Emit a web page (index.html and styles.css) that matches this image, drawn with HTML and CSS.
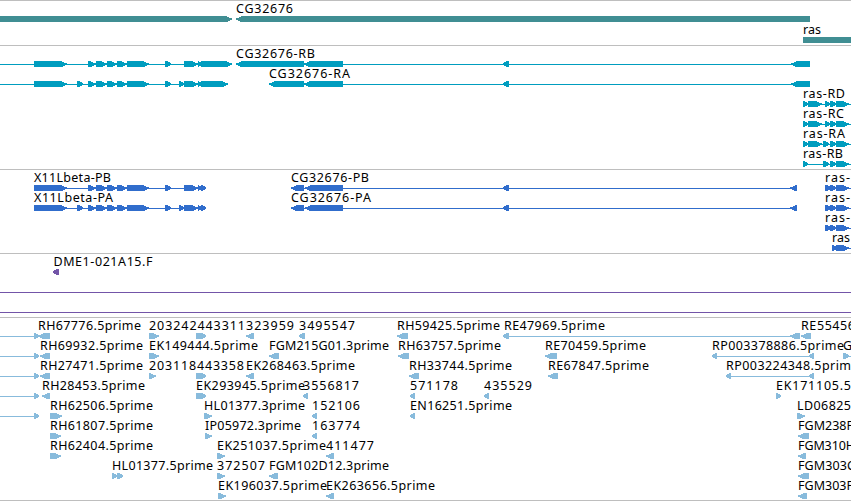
FILE: index.html
```html
<!DOCTYPE html>
<html lang="en">
<head>
<meta charset="utf-8">
<title>Genome browser</title>
<link rel="stylesheet" href="styles.css">
</head>
<body>
<main class="browser">
  <section class="track genes" data-track="genes"></section>
  <section class="track transcripts" data-track="transcripts"></section>
  <section class="track proteins" data-track="proteins"></section>
  <section class="track clones" data-track="clones"></section>
  <section class="track ests" data-track="ests"></section>
</main>
<script src="tracks.js"></script>
</body>
</html>
```
FILE: styles.css
```css
body {
  margin: 0;
  background: #fff;
  overflow: hidden;
}

.browser {
  display: flex;
  flex-direction: column;
  width: 851px;
  height: 501px;
  box-sizing: border-box;
  border-bottom: 1px solid #bebebe;
}

.track {
  box-sizing: border-box;
  border-top: 1px solid #bebebe;
  overflow: hidden;
}

.track svg {
  display: block;
}

.genes { height: 45px; color: #408e93; }
.transcripts { height: 124px; color: #009dbf; }
.proteins { height: 84px; color: #306dcc; }
.clones { height: 64px; color: #7355a8; }
.ests { height: 183px; color: #88bbdc; }

.feature {
  fill: currentColor;
  shape-rendering: crispEdges;
}

.label {
  fill: #000;
  font: 12.5px "Noto Sans", "DejaVu Sans", sans-serif;
}
```
FILE: tracks.js
```js
// Labels: [x, baseline, width, text].
// Rows: [top of the feature boxes, connector spans, right-pointing boxes, left-pointing boxes].
const exons = [[34, 67], [88, 96], [96, 107], [107, 117], [117, 127], [127, 149], [165, 171], [184, 198]];
const extra = [[77, 83], [179, 184]];

const tracks = {
  genes: {
    top: 1, height: 44,
    labels: [[236, 13, 57, 'CG32676'], [803, 34, 18, 'ras']],
    rows: [
      [16, [], [[-20, 232]], [[236, 810]]],
      [37, [], [[803, 900]], []]
    ]
  },
  transcripts: {
    top: 46, height: 123,
    labels: [
      [236, 58, 79, 'CG32676-RB'], [269, 78, 81, 'CG32676-RA'],
      [803, 98, 42, 'ras-RD'], [803, 118, 41, 'ras-RC'],
      [803, 138, 42, 'ras-RA'], [803, 158, 40, 'ras-RB']
    ],
    rows: [
      [61, [[0, 201], [343, 810]], [...exons, [198, 202], [201, 232]], [[236, 304], [304, 343], [503, 509], [791, 810]]],
      [81, [[0, 201], [343, 810]], [...exons, ...extra, [198, 202], [201, 228]], [[269, 304], [304, 343], [503, 509], [791, 810]]],
      [101, [[803, 851]], [[803, 808], [808, 822], [825, 830], [830, 836], [836, 849]], []],
      [121, [[803, 851]], [[803, 808], [808, 822], [825, 830], [830, 836], [836, 849]], []],
      [141, [[803, 851]], [[803, 808], [808, 822], [823, 829], [830, 836], [836, 849]], []],
      [161, [[803, 851]], [[803, 808], [823, 829], [830, 836], [836, 849]], []]
    ]
  },
  proteins: {
    top: 170, height: 83,
    labels: [
      [34, 182, 77, 'X11Lbeta-PB'], [34, 202, 79, 'X11Lbeta-PA'],
      [291, 182, 78, 'CG32676-PB'], [291, 202, 80, 'CG32676-PA'],
      [825, 182, 25, 'ras-'], [825, 202, 25, 'ras-'], [825, 222, 25, 'ras-'], [832, 242, 18, 'ras']
    ],
    rows: [
      [185, [[34, 205], [300, 797], [825, 851]], [...exons, [198, 202], [201, 206], [825, 831], [830, 836], [836, 849]], [[291, 304], [305, 343], [503, 509], [790, 797]]],
      [205, [[34, 205], [300, 797], [825, 851]], [...exons, ...extra, [198, 202], [201, 206], [825, 831], [830, 836], [836, 849]], [[291, 304], [305, 343], [503, 509], [790, 797]]],
      [225, [[825, 851]], [[825, 831], [830, 836], [836, 849]], []],
      [245, [[832, 851]], [[832, 837], [836, 849]], []]
    ]
  },
  clones: {
    top: 254, height: 63,
    labels: [[53.5, 266, 99, 'DME1-021A15.F']],
    rows: [
      [269, [], [], [[53, 59]]],
      [289, [[0, 851]], [], []],
      [309, [[0, 851]], [], []]
    ]
  },
  ests: {
    top: 318, height: 182,
    labels: [
      [38, 330, 103, 'RH67776.5prime'], [149, 330, 96, '203242443311'], [246, 330, 48, '323959'], [299, 330, 56, '3495547'],
      [397, 330, 103, 'RH59425.5prime'], [504, 330, 101, 'RE47969.5prime'],
      [801, 330, 54, 'RE55456'],
      [40, 350, 103, 'RH69932.5prime'], [149, 350, 109, 'EK149444.5prime'], [269, 350, 120, 'FGM215G01.3prime'],
      [398, 350, 103, 'RH63757.5prime'], [545, 350, 101, 'RE70459.5prime'], [712, 350, 132, 'RP003378886.5prime'], [843, 350, 9, 'G'],
      [40, 370, 103, 'RH27471.5prime'], [149, 370, 95, '203118443358'], [246, 370, 109, 'EK268463.5prime'],
      [409, 370, 103, 'RH33744.5prime'], [548, 370, 101, 'RE67847.5prime'], [726, 370, 125, 'RP003224348.5prim'],
      [42, 390, 103, 'RH28453.5prime'], [196, 390, 109, 'EK293945.5prime'], [303, 390, 56, '3556817'],
      [410, 390, 48, '571178'], [484, 390, 48, '435529'], [776, 390, 75, 'EK171105.5'],
      [50, 410, 103, 'RH62506.5prime'], [204, 410, 101, 'HL01377.3prime'], [312, 410, 48, '152106'],
      [410, 410, 102, 'EN16251.5prime'], [797, 410, 54, 'LD06825'],
      [50, 430, 103, 'RH61807.5prime'], [205, 430, 96, 'IP05972.3prime'], [312, 430, 48, '163774'], [798, 430, 55, 'FGM238F'],
      [50, 450, 103, 'RH62404.5prime'], [217, 450, 109, 'EK251037.5prime'], [326, 450, 48, '411477'], [798, 450, 57, 'FGM310H'],
      [112, 470, 101, 'HL01377.5prime'], [217, 470, 48, '372507'], [269, 470, 120, 'FGM102D12.3prime'], [798, 470, 57, 'FGM303C'],
      [218, 490, 109, 'EK196037.5prime'], [326, 490, 109, 'EK263656.5prime'], [798, 490, 55, 'FGM303F']
    ],
    rows: [
      [333, [[0, 38], [505, 799]], [[34, 39], [149, 159], [196, 202], [199, 204], [201, 206]], [[38, 50], [246, 254], [299, 305], [397, 408], [503, 509], [790, 800], [801, 811]]],
      [353, [[0, 38], [714, 812], [845, 851]], [[34, 39], [149, 159], [843, 849]], [[40, 50], [269, 279], [398, 409], [545, 557], [712, 717], [809, 814]]],
      [373, [[0, 38], [728, 812]], [[34, 39], [149, 156], [196, 202], [199, 204], [201, 206]], [[40, 50], [246, 254], [409, 419], [548, 558], [726, 731], [809, 814]]],
      [393, [[0, 38]], [[34, 39], [196, 202], [199, 204], [201, 206], [776, 781]], [[42, 50], [303, 308], [410, 415], [484, 489]]],
      [413, [[0, 38]], [[34, 39], [50, 62], [204, 212], [797, 805]], [[312, 317], [410, 415]]],
      [433, [], [[50, 61], [205, 212]], [[312, 317], [798, 809]]],
      [453, [], [[50, 61], [217, 225]], [[326, 334], [798, 806]]],
      [473, [], [[112, 117], [117, 123], [217, 225]], [[269, 278], [798, 809]]],
      [493, [], [[218, 226]], [[326, 334], [798, 807]]]
    ]
  }
};

function connector(a, b, y) {
  return `M${a} ${y + 3}H${b}v1H${a}z`;
}

// Pointed box drawn as six pixel rows, widest on the two middle ones.
function arrow(a, b, y, dir) {
  const insets = b - a < 7 ? [3, 1, 0, 0, 1, 3] : [5, 3, 0, 0, 2, 4];
  return insets.map((inset, i) => {
    const x0 = dir > 0 ? a : a + inset;
    const x1 = dir > 0 ? b - inset : b;
    return `M${x0} ${y + i}H${x1}v1H${x0}z`;
  }).join('');
}

for (const el of document.querySelectorAll('[data-track]')) {
  const t = tracks[el.dataset.track];
  let svg = `<svg width="851" height="${t.height}" viewBox="0 ${t.top} 851 ${t.height}">`;
  for (const [y, lines, right, left] of t.rows) {
    const shapes = [
      ...lines.map(([a, b]) => connector(a, b, y)),
      ...right.map(([a, b]) => arrow(a, b, y, 1)),
      ...left.map(([a, b]) => arrow(a, b, y, -1))
    ];
    for (const d of shapes) svg += `<path class="feature" d="${d}"/>`;
  }
  for (const [x, y, w, text] of t.labels) {
    svg += `<text class="label" x="${x}" y="${y}" textLength="${w}">${text}</text>`;
  }
  el.innerHTML = svg + '</svg>';
}
```
